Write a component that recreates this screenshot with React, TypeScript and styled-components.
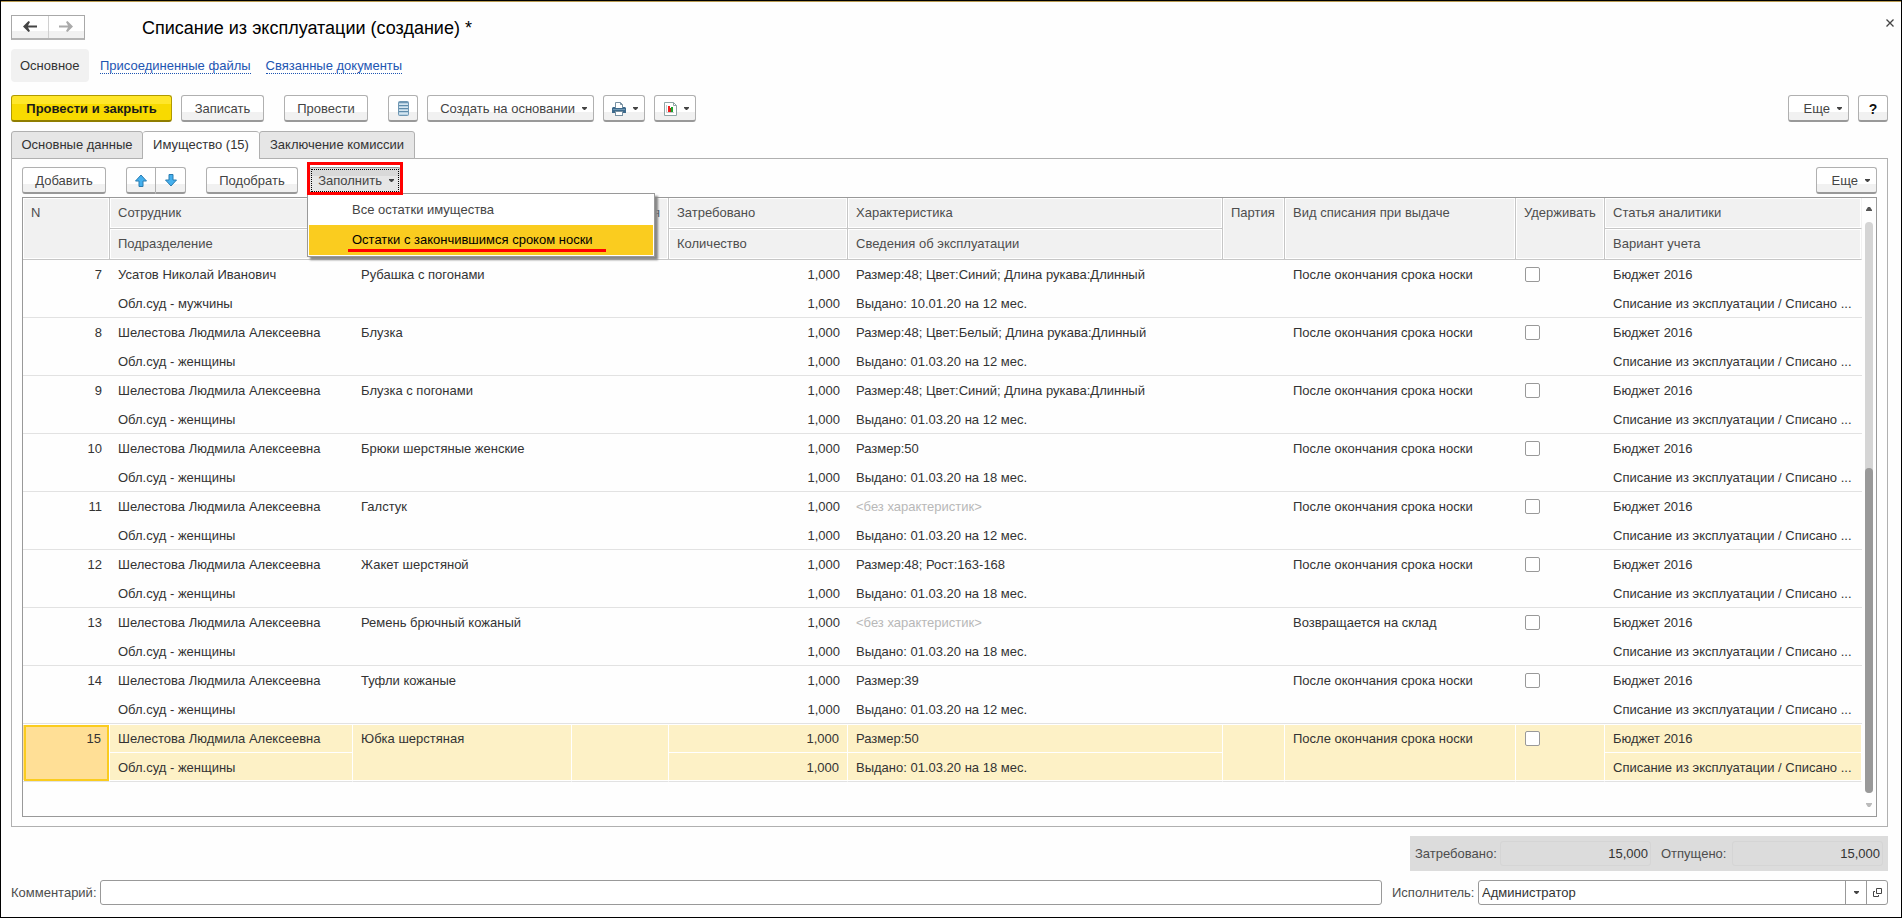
import React from 'react';
import styled, { createGlobalStyle, css } from 'styled-components';

const GlobalStyle = createGlobalStyle`
  * { box-sizing: border-box; }
  body { margin: 0; background: #fff; }
  body, button, input, table {
    font-family: "Liberation Sans", Arial, sans-serif;
    font-size: 13px;
    line-height: 16px;
    color: #333;
  }
`;

const Window = styled.main`
  display: flex;
  flex-direction: column;
  min-height: 100vh;
  padding: 12px 13px 12px 10px;
  border: 1px solid #000;
  background: #fefefe;
  box-shadow: inset 0 1px 0 #b79a50;
`;

const TitleBar = styled.header`
  display: flex;
  align-items: center;
  height: 28px;
`;

const History = styled.div`
  display: flex;
  margin-right: 57px;
  width: 74px;
  height: 25px;
  border: 1px solid #a8a8a8;
  border-bottom: 2px solid #b4b4b4;
`;

const HistoryButton = styled.button`
  flex: 1;
  display: flex;
  align-items: center;
  justify-content: center;
  padding: 0;
  border: 0;
  background: linear-gradient(#fff 66%, #f1f1f1 66%);
  & + & { border-left: 1px solid #d0d0d0; }
`;

const Title = styled.h1`
  flex: 1;
  margin: 0;
  padding-top: 1px;
  font-size: 18px;
  line-height: 24px;
  font-weight: 400;
  color: #000;
`;

const CloseButton = styled.button`
  display: flex;
  align-self: flex-start;
  padding: 6px 0;
  margin-right: -6px;
  border: 0;
  background: none;
`;

const Sections = styled.nav`
  display: flex;
  align-items: center;
  gap: 20px;
  height: 33px;
  margin-top: 8px;
`;

const CurrentSection = styled.span`
  width: 78px;
  padding: 9px 0 8px 9px;
  margin-right: -9px;
  border-radius: 4px;
  background: #f1f1f1;
`;

const SectionLink = styled.a`
  padding-top: 1px;
  line-height: 15px;
  color: #1d55b2;
  text-decoration: none;
  border-bottom: 1px dotted #1d55b2;
  & + & { margin-left: -5px; }
`;

const Bar = styled.div`
  display: flex;
  align-items: center;
  height: 27px;
`;

const CommandBar = styled(Bar)`
  margin-top: 13px;
`;

const Push = styled.div<{ $wide?: boolean }>`
  width: ${p => (p.$wide ? 'auto' : '20px')};
  flex: ${p => (p.$wide ? '1' : 'none')};
`;

const Gap = styled.div`
  width: 9px;
  flex: none;
`;

type ButtonKind = 'normal' | 'primary' | 'pressed';

const kinds = {
  normal: css`
    background: linear-gradient(#fff 66%, #f1f1f1 66%);
    border-color: #b0b0b0 #b0b0b0 #999;
    color: #444;
  `,
  primary: css`
    background: linear-gradient(#ffe62a 33%, #f8da00 33%);
    border-color: #b09a00 #b09a00 #8f7d00;
    color: #1a1a1a;
    font-weight: 700;
  `,
  pressed: css`
    background: linear-gradient(#d9d9d9 33%, #e6e6e6 33%);
    border-color: #999;
    color: #444;
    outline: 1px dotted #000;
    outline-offset: -3px;
  `,
};

const Button = styled.button<{ $w: number; $kind?: ButtonKind }>`
  display: flex;
  align-items: center;
  justify-content: center;
  gap: 7px;
  flex: none;
  width: ${p => p.$w}px;
  height: 27px;
  padding: 1px 0 0;
  border: 1px solid;
  border-bottom-width: 2px;
  border-radius: 3px;
  white-space: nowrap;
  ${p => kinds[p.$kind ?? 'normal']}
`;

const MenuButton = styled(Button)`
  justify-content: flex-end;
  padding-right: 6px;
`;

const HelpButton = styled(Button)`
  font-size: 14px;
  font-weight: 700;
  color: #111;
`;

const Pair = styled.div`
  display: flex;
  button:first-child { border-radius: 3px 0 0 3px; }
  button:last-child { border-radius: 0 3px 3px 0; border-left: 0; }
`;

const Tabs = styled.div`
  display: flex;
  height: 28px;
  margin-top: 9px;
`;

const Tab = styled.button<{ $active?: boolean; $w: number }>`
  width: ${p => p.$w}px;
  height: 28px;
  padding: 0 0 1px;
  border: 1px solid #b0b0b0;
  border-left-width: ${p => (p.$active ? '0' : '1px')};
  border-right-width: ${p => (p.$active ? '0' : '1px')};
  border-bottom-color: ${p => (p.$active ? '#fefefe' : '#b0b0b0')};
  border-radius: 3px 3px 0 0;
  background: ${p => (p.$active ? '#fefefe' : '#e6e6e6')};
  z-index: 1;
`;

const Panel = styled.section`
  flex: 1;
  display: flex;
  flex-direction: column;
  margin-top: -1px;
  padding: 8px 10px 9px;
  border: 1px solid #b0b0b0;
`;

const FillAnchor = styled.div`
  position: relative;
  margin-left: 2px;
`;

const RedFrame = styled.div`
  position: absolute;
  inset: -5px -2px -1px -2px;
  border: 3px solid #f00;
  z-index: 3;
  pointer-events: none;
`;

const Menu = styled.ul`
  position: absolute;
  top: 26px;
  left: -2px;
  z-index: 2;
  width: 348px;
  margin: 0;
  padding: 1px;
  list-style: none;
  border: 1px solid #999;
  background: #fff;
  box-shadow: 3px 3px 2px #888;
`;

const MenuItem = styled.li<{ $active?: boolean }>`
  button {
    display: block;
    width: 100%;
    height: 30px;
    padding: 0 0 0 43px;
    border: 0;
    text-align: left;
    background: ${p => (p.$active ? '#facc1f' : '#fff')};
    color: ${p => (p.$active ? '#000' : '#444')};
  }
`;

const RedLine = styled.div`
  position: absolute;
  left: 40px;
  bottom: 4px;
  width: 258px;
  height: 3px;
  background: #f00;
`;

const GridBox = styled.div`
  flex: 1;
  display: flex;
  margin-top: 3px;
  border: 1px solid #999;
`;

const Grid = styled.table`
  flex: 1;
  align-self: flex-start;
  width: 0;
  table-layout: fixed;
  border-collapse: separate;
  border-spacing: 0;
`;

const Col = styled.col<{ $w?: number }>`
  width: ${p => (p.$w ? `${p.$w}px` : 'auto')};
`;

const Th = styled.th<{ $right?: boolean }>`
  height: 31px;
  padding: 0 8px;
  font-weight: 400;
  text-align: ${p => (p.$right ? 'right' : 'left')};
  vertical-align: top;
  line-height: 29px;
  color: #4d4d4d;
  white-space: nowrap;
  overflow: hidden;
  background: #f1f1f1;
  border-right: 1px solid #c6c6c6;
  border-bottom: 1px solid #c6c6c6;
  box-shadow: inset 0 0 0 1px #fff;
  &.last { border-right-color: transparent; }
`;

const Td = styled.td<{ $right?: boolean; $muted?: boolean }>`
  height: 29px;
  padding: 0 8px;
  vertical-align: top;
  line-height: 29px;
  text-align: ${p => (p.$right ? 'right' : 'left')};
  color: ${p => (p.$muted ? '#b8b8b8' : '#333')};
  white-space: nowrap;
  &:last-child { padding-right: 2px; }
`;

const Row = styled.tr<{ $selected?: boolean; $end?: boolean }>`
  ${Td} {
    ${p => p.$end && css`
      padding-top: 2px;
      border-bottom: 1px solid #e2e2e2;
      line-height: 26px;
    `}
    ${p => p.$selected && css`
      background: #fdf1c6;
      border-right: 1px solid #fff;
      box-shadow: inset 0 -1px 0 #fff, inset 0 1px 0 ${p.$end ? '#fdf1c6' : '#fff'};
    `}
  }
  ${Td}[rowspan] { border-bottom: 1px solid #e2e2e2; }
  ${Td}.current {
    background: #ffdf96;
    box-shadow: inset 0 -1px 0 #fff, inset 0 1px 0 #fff;
    outline: 2px solid #facc1f;
    outline-offset: -3px;
  }
`;

const Check = styled.input`
  appearance: none;
  display: block;
  width: 15px;
  height: 15px;
  margin: 7px 0 0 1px;
  border: 1px solid #999;
  border-radius: 2px;
  background: #fff;
`;

const Scroll = styled.div`
  display: flex;
  flex-direction: column;
  align-items: center;
  width: 14px;
  padding: 9px 0 9px;
`;

const Track = styled.div`
  flex: 1;
  display: flex;
  flex-direction: column;
  justify-content: flex-end;
  width: 8px;
  margin: 11px 0 10px;
  border-radius: 4px;
  background: #d5d5d5;
`;

const Thumb = styled.div`
  height: 57%;
  border-radius: 4px;
  background: #999;
`;

const Totals = styled.div`
  display: flex;
  align-items: center;
  align-self: flex-end;
  height: 35px;
  margin-top: 9px;
  padding: 0 5px;
  background: #dcdcdc;
`;

const Label = styled.label<{ $w: number }>`
  width: ${p => p.$w}px;
  flex: none;
  color: #4d4d4d;
  white-space: nowrap;
`;

const TotalInput = styled.input`
  width: 151px;
  height: 25px;
  padding: 0 2px;
  border: 1px solid #d5d5d5;
  border-radius: 3px;
  background: transparent;
  text-align: right;
  & + label { margin-left: 10px; }
`;

const Footer = styled.footer`
  display: flex;
  align-items: center;
  margin-top: 9px;
`;

const Field = styled.div<{ $w?: number }>`
  display: flex;
  flex: ${p => (p.$w ? 'none' : '1')};
  width: ${p => (p.$w ? `${p.$w}px` : 'auto')};
  height: 25px;
  margin-right: ${p => (p.$w ? '0' : '10px')};
  border: 1px solid #999;
  border-radius: 3px;
  background: #fff;
  input {
    flex: 1;
    min-width: 0;
    padding: 0 3px;
    border: 0;
    background: none;
  }
  button {
    display: flex;
    align-items: center;
    justify-content: center;
    width: 21px;
    padding: 0;
    border: 0;
    border-left: 1px solid #999;
    background: none;
  }
`;

const Caret = ({ color = '#444' }: { color?: string }) => (
  <svg width="5" height="3" viewBox="0 0 5 3" aria-hidden="true">
    <path d="M0 0h5v1L3 3H2L0 1z" fill={color} />
  </svg>
);

const ScrollCaret = ({ up, color }: { up?: boolean; color: string }) => (
  <svg width="6" height="4" viewBox="0 0 6 4" aria-hidden="true">
    <path d={up ? 'M0 4V3l2-3h2l2 3v1z' : 'M0 0v1l2 3h2l2-3V0z'} fill={color} />
  </svg>
);

const Arrow = ({ flip, color }: { flip?: boolean; color: string }) => (
  <svg width="14" height="11" viewBox="0 0 14 11" aria-hidden="true">
    <path
      d={flip ? 'M0 4.500h9L7 1l1.500-1L14 5.500 8.500 11 7 10l2-3.500H0z' : 'M14 4.500H5L7 1 5.500 0 0 5.500 5.500 11 7 10 5 6.500h9z'}
      fill={color}
    />
  </svg>
);

const MoveArrow = ({ down }: { down?: boolean }) => (
  <svg width="12" height="13" viewBox="0 0 12 13" aria-hidden="true">
    <path
      d={down ? 'M4 .5h4V6h3.500L6 12 .5 6H4z' : 'M4 12.500h4V7h3.500L6 1 .5 7H4z'}
      fill="#45b0ee"
      stroke="#2b7cb0"
    />
  </svg>
);

const RegisterIcon = () => (
  <svg width="11" height="15" viewBox="0 0 11 15" aria-hidden="true">
    <rect x=".5" y=".5" width="10" height="14" rx="1" fill="#b5d0e2" stroke="#6f97b3" />
    <path d="M1 1.500h9" stroke="#6f97b3" />
    <path d="M1 4.500h9M1 7.500h9M1 10.500h9" stroke="#5f8cab" />
    <path d="M1 3.500h9M1 6.500h9M1 9.500h9M1 12.500h9" stroke="#d5e5ef" />
  </svg>
);

const PrinterIcon = () => (
  <svg width="14" height="14" viewBox="0 0 14 14" aria-hidden="true">
    <path d="M3.500 6V.5h5l2 2V6" fill="#fff" stroke="#7891a2" />
    <path d="M8.500.5v2h2" fill="none" stroke="#7891a2" />
    <path d="M1 5h2v1h8V5h2l1 1v5H0V6z" fill="#3d6a8c" />
    <rect x="1" y="7" width="12" height="1" fill="#6f97b3" />
    <rect x="3.500" y="9.500" width="7" height="4" fill="#fff" stroke="#7891a2" />
  </svg>
);

const ReportIcon = () => (
  <svg width="13" height="14" viewBox="0 0 13 14" aria-hidden="true">
    <path d="M.5.5h9l3 3v10H.5z" fill="#fff" stroke="#8fa5a5" />
    <path d="M9.500.5v3h3" fill="none" stroke="#8fa5a5" />
    <path d="M2.500 3v7.500H10" fill="none" stroke="#c5d0d0" />
    <rect x="4" y="4" width="2" height="6" fill="#f02020" />
    <rect x="7" y="5" width="2" height="5" fill="#19a52c" />
    <rect x="6" y="6" width="1" height="4" fill="#b03020" />
  </svg>
);

const CloseIcon = () => (
  <svg width="8" height="8" viewBox="0 0 8 8" aria-hidden="true">
    <path d="M.5.5l7 7M7.500.5l-7 7" stroke="#444" strokeWidth="1.300" />
  </svg>
);

const OpenIcon = () => (
  <svg width="9" height="9" viewBox="0 0 9 9" fill="none" stroke="#444" aria-hidden="true">
    <path d="M3.500.5h5v5h-5zM2 3.500H.5v5h5V7" />
  </svg>
);

const columns = [87, 243, 219, 97, 179, undefined, 62, 231, 89, 257];

const women = 'Обл.суд - женщины';
const person = 'Шелестова Людмила Алексеевна';
const worn = 'После окончания срока носки';

const rows = [
  { n: 7, who: 'Усатов Николай Иванович', dept: 'Обл.суд - мужчины', item: 'Рубашка с погонами', spec: 'Размер:48; Цвет:Синий; Длина рукава:Длинный', issued: 'Выдано: 10.01.20 на 12 мес.', kind: worn },
  { n: 8, who: person, dept: women, item: 'Блузка', spec: 'Размер:48; Цвет:Белый; Длина рукава:Длинный', issued: 'Выдано: 01.03.20 на 12 мес.', kind: worn },
  { n: 9, who: person, dept: women, item: 'Блузка с погонами', spec: 'Размер:48; Цвет:Синий; Длина рукава:Длинный', issued: 'Выдано: 01.03.20 на 12 мес.', kind: worn },
  { n: 10, who: person, dept: women, item: 'Брюки шерстяные женские', spec: 'Размер:50', issued: 'Выдано: 01.03.20 на 18 мес.', kind: worn },
  { n: 11, who: person, dept: women, item: 'Галстук', spec: '', issued: 'Выдано: 01.03.20 на 12 мес.', kind: worn },
  { n: 12, who: person, dept: women, item: 'Жакет шерстяной', spec: 'Размер:48; Рост:163-168', issued: 'Выдано: 01.03.20 на 18 мес.', kind: worn },
  { n: 13, who: person, dept: women, item: 'Ремень брючный кожаный', spec: '', issued: 'Выдано: 01.03.20 на 18 мес.', kind: 'Возвращается на склад' },
  { n: 14, who: person, dept: women, item: 'Туфли кожаные', spec: 'Размер:39', issued: 'Выдано: 01.03.20 на 12 мес.', kind: worn },
  { n: 15, who: person, dept: women, item: 'Юбка шерстяная', spec: 'Размер:50', issued: 'Выдано: 01.03.20 на 18 мес.', kind: worn },
];

export default function App() {
  return (
    <>
      <GlobalStyle />
      <Window>
        <TitleBar>
          <History>
            <HistoryButton aria-label="Назад"><Arrow color="#444" /></HistoryButton>
            <HistoryButton aria-label="Вперед"><Arrow flip color="#aaa" /></HistoryButton>
          </History>
          <Title>Списание из эксплуатации (создание) *</Title>
          <CloseButton aria-label="Закрыть"><CloseIcon /></CloseButton>
        </TitleBar>

        <Sections>
          <CurrentSection>Основное</CurrentSection>
          <SectionLink href="#files">Присоединенные файлы</SectionLink>
          <SectionLink href="#related">Связанные документы</SectionLink>
        </Sections>

        <CommandBar>
          <Button $w={161} $kind="primary">Провести и закрыть</Button>
          <Gap />
          <Button $w={83}>Записать</Button>
          <Push />
          <Button $w={84}>Провести</Button>
          <Push />
          <Button $w={30} aria-label="Движения документа"><RegisterIcon /></Button>
          <Gap />
          <MenuButton $w={167}>Создать на основании<Caret /></MenuButton>
          <Gap />
          <MenuButton $w={42} aria-label="Печать"><PrinterIcon /><Caret /></MenuButton>
          <Gap />
          <MenuButton $w={42} aria-label="Отчеты"><ReportIcon /><Caret /></MenuButton>
          <Push $wide />
          <MenuButton $w={61}>Еще<Caret /></MenuButton>
          <Gap />
          <HelpButton $w={30}>?</HelpButton>
        </CommandBar>

        <Tabs role="tablist">
          <Tab role="tab" $w={132}>Основные данные</Tab>
          <Tab role="tab" $w={116} $active aria-selected="true">Имущество (15)</Tab>
          <Tab role="tab" $w={156}>Заключение комиссии</Tab>
        </Tabs>

        <Panel>
          <Bar>
            <Button $w={84}>Добавить</Button>
            <Push />
            <Pair>
              <Button $w={30} aria-label="Вверх"><MoveArrow /></Button>
              <Button $w={30} aria-label="Вниз"><MoveArrow down /></Button>
            </Pair>
            <Push />
            <Button $w={92}>Подобрать</Button>
            <Gap />
            <FillAnchor>
              <MenuButton $w={92} $kind="pressed" aria-expanded="true">Заполнить<Caret /></MenuButton>
              <Menu>
                <MenuItem><button>Все остатки имущества</button></MenuItem>
                <MenuItem $active><button>Остатки с закончившимся сроком носки</button></MenuItem>
                <RedLine />
              </Menu>
              <RedFrame />
            </FillAnchor>
            <Push $wide />
            <MenuButton $w={61}>Еще<Caret /></MenuButton>
          </Bar>

          <GridBox>
            <Grid>
              <colgroup>{columns.map((w, i) => <Col key={i} $w={w} />)}</colgroup>
              <thead>
                <tr>
                  <Th rowSpan={2}>N</Th>
                  <Th>Сотрудник</Th>
                  <Th rowSpan={2} />
                  <Th rowSpan={2} $right>я</Th>
                  <Th>Затребовано</Th>
                  <Th>Характеристика</Th>
                  <Th rowSpan={2}>Партия</Th>
                  <Th rowSpan={2}>Вид списания при выдаче</Th>
                  <Th rowSpan={2}>Удерживать</Th>
                  <Th className="last">Статья аналитики</Th>
                </tr>
                <tr>
                  <Th>Подразделение</Th>
                  <Th>Количество</Th>
                  <Th>Сведения об эксплуатации</Th>
                  <Th className="last">Вариант учета</Th>
                </tr>
              </thead>
              <tbody>
                {rows.map(r => {
                  const selected = r.n === 15;
                  return (
                    <React.Fragment key={r.n}>
                      <Row $selected={selected}>
                        <Td rowSpan={2} $right className={selected ? 'current' : undefined}>{r.n}</Td>
                        <Td>{r.who}</Td>
                        <Td rowSpan={2}>{r.item}</Td>
                        <Td rowSpan={2} />
                        <Td $right>1,000</Td>
                        <Td $muted={!r.spec}>{r.spec || '<без характеристик>'}</Td>
                        <Td rowSpan={2} />
                        <Td rowSpan={2}>{r.kind}</Td>
                        <Td rowSpan={2}><Check type="checkbox" aria-label="Удерживать" /></Td>
                        <Td>Бюджет 2016</Td>
                      </Row>
                      <Row $selected={selected} $end>
                        <Td>{r.dept}</Td>
                        <Td $right>1,000</Td>
                        <Td>{r.issued}</Td>
                        <Td>Списание из эксплуатации / Списано ...</Td>
                      </Row>
                    </React.Fragment>
                  );
                })}
              </tbody>
            </Grid>
            <Scroll>
              <ScrollCaret up color="#555" />
              <Track><Thumb /></Track>
              <ScrollCaret color="#bbb" />
            </Scroll>
          </GridBox>
        </Panel>

        <Totals>
          <Label $w={85} htmlFor="requested">Затребовано:</Label>
          <TotalInput id="requested" readOnly value="15,000" />
          <Label $w={71} htmlFor="released">Отпущено:</Label>
          <TotalInput id="released" readOnly value="15,000" />
        </Totals>

        <Footer>
          <Label $w={89} htmlFor="comment">Комментарий:</Label>
          <Field><input id="comment" /></Field>
          <Label $w={86} htmlFor="performer">Исполнитель:</Label>
          <Field $w={410}>
            <input id="performer" defaultValue="Администратор" />
            <button aria-label="Выбрать"><Caret /></button>
            <button aria-label="Открыть"><OpenIcon /></button>
          </Field>
        </Footer>
      </Window>
    </>
  );
}
